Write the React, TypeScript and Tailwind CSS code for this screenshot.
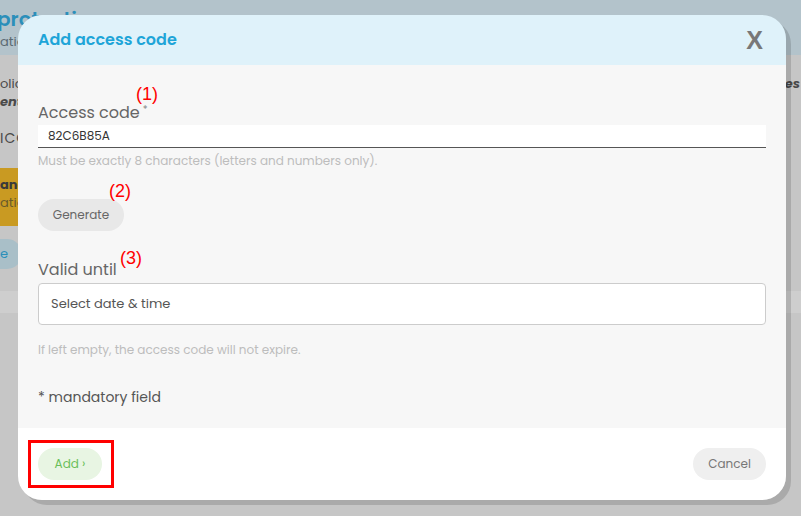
import React from "react";

/**
 * "Add access code" modal over a dimmed settings page.
 * Red (1)/(2)/(3) marks and the red box are review annotations on top.
 */

const font = { fontFamily: "Poppins, Inter, 'Noto Sans', sans-serif" };

function Backdrop() {
  return (
    <div className="flex h-full flex-col">
      <div className="h-[55px] bg-[#b3c3cb] pt-[6px]">
        <p className="-ml-[3px] text-[20px] font-semibold leading-[26px] text-[#2b8fba]">
          protection
        </p>
        <p className="mt-[1px] text-[13px] leading-[18px] text-[#5a6a72]">ation</p>
      </div>
      <div className="flex flex-1 flex-col bg-[#c6c6c6]">
        <div className="flex justify-between pt-[20px] text-[13px] leading-[18px] text-[#4a4a4a]">
          <div>
            <p>olic</p>
            <p className="font-bold italic">ent,</p>
          </div>
          <p className="pr-[1px] font-bold italic">es</p>
        </div>
        <p className="mt-[18px] text-[14px] leading-[18px] tracking-[1px] text-[#4a4a4a]">ICC</p>
        <div className="mt-[21px] h-[58px] w-[30px] bg-[#c99a22] pt-[8px] text-[13px] leading-[18px]">
          <p className="font-bold text-[#3a3a3a]">ang</p>
          <p className="text-[#6a5a2a]">atio</p>
        </div>
        <div className="mt-[13px] flex h-[30px] w-[22px] items-center rounded-r-full bg-[#a9bfc8] text-[13px] text-[#2b8fba]">
          e
        </div>
        <div className="mt-[22px] h-[22px] bg-[#cecece]" />
      </div>
    </div>
  );
}

function Modal() {
  return (
    <div className="absolute left-[18px] top-[15px] flex h-[485px] w-[768px] flex-col overflow-hidden rounded-[24px] shadow-[5px_5px_0_rgba(0,0,0,0.14)]">
      <div className="flex h-[50px] items-center justify-between bg-[#dff2fa] pl-[20px] pr-[23px]">
        <h2 className="text-[16px] font-semibold text-[#1ea5d8]">Add access code</h2>
        <span
          className="text-[25px] font-bold leading-none text-[#787878]"
          style={{ fontFamily: "'Liberation Sans', Arial, sans-serif" }}
        >
          X
        </span>
      </div>

      <div className="flex flex-1 flex-col bg-[#f7f7f7] px-[20px]">
        <label className="mt-[36px] text-[16px] leading-[24px] text-[#666]">
          Access code<sup className="ml-[3px] text-[10px] text-[#888]">*</sup>
        </label>
        <div className="flex h-[23px] items-center border-b border-[#555] bg-white pl-[10px] text-[12px] text-[#333]">
          82C6B85A
        </div>
        <p className="mt-[4px] text-[12px] leading-[18px] text-[#bdbdbd]">
          Must be exactly 8 characters (letters and numbers only).
        </p>
        <button className="mt-[29px] h-[32px] w-[86px] rounded-full bg-[#e8e8e8] text-[12px] text-[#666]">
          Generate
        </button>
        <label className="mt-[27px] text-[16px] leading-[24px] text-[#666]">Valid until</label>
        <div className="mt-[1px] flex h-[42px] items-center rounded-[4px] border border-[#cccccc] bg-white pl-[12px] text-[13px] text-[#555]">
          Select date &amp; time
        </div>
        <p className="mt-[16px] text-[12px] leading-[18px] text-[#bdbdbd]">
          If left empty, the access code will not expire.
        </p>
        <p className="mt-[28px] text-[14px] leading-[20px] text-[#555]">* mandatory field</p>
      </div>

      <div className="flex h-[72px] items-center justify-between bg-white px-[20px]">
        <button className="h-[32px] w-[64px] rounded-full bg-[#e8f5e3] text-[12px] text-[#6abf5a]">
          Add ›
        </button>
        <button className="h-[32px] w-[73px] rounded-full bg-[#efefef] text-[12px] text-[#777]">
          Cancel
        </button>
      </div>
    </div>
  );
}

function Marks() {
  const mark = "absolute text-[18px] leading-[20px] text-[#ff0000]";
  const red = { fontFamily: "'Liberation Sans', Arial, sans-serif" };
  return (
    <>
      <span className={`${mark} left-[136px] top-[84px]`} style={red}>(1)</span>
      <span className={`${mark} left-[109px] top-[181px]`} style={red}>(2)</span>
      <span className={`${mark} left-[120px] top-[248px]`} style={red}>(3)</span>
      <div className="absolute left-[28px] top-[440px] h-[48px] w-[86px] border-[3px] border-[#ff0000]" />
    </>
  );
}

export default function App() {
  return (
    <div className="relative h-[516px] w-[801px] overflow-hidden bg-[#c6c6c6]" style={font}>
      <Backdrop />
      <Modal />
      <Marks />
    </div>
  );
}
